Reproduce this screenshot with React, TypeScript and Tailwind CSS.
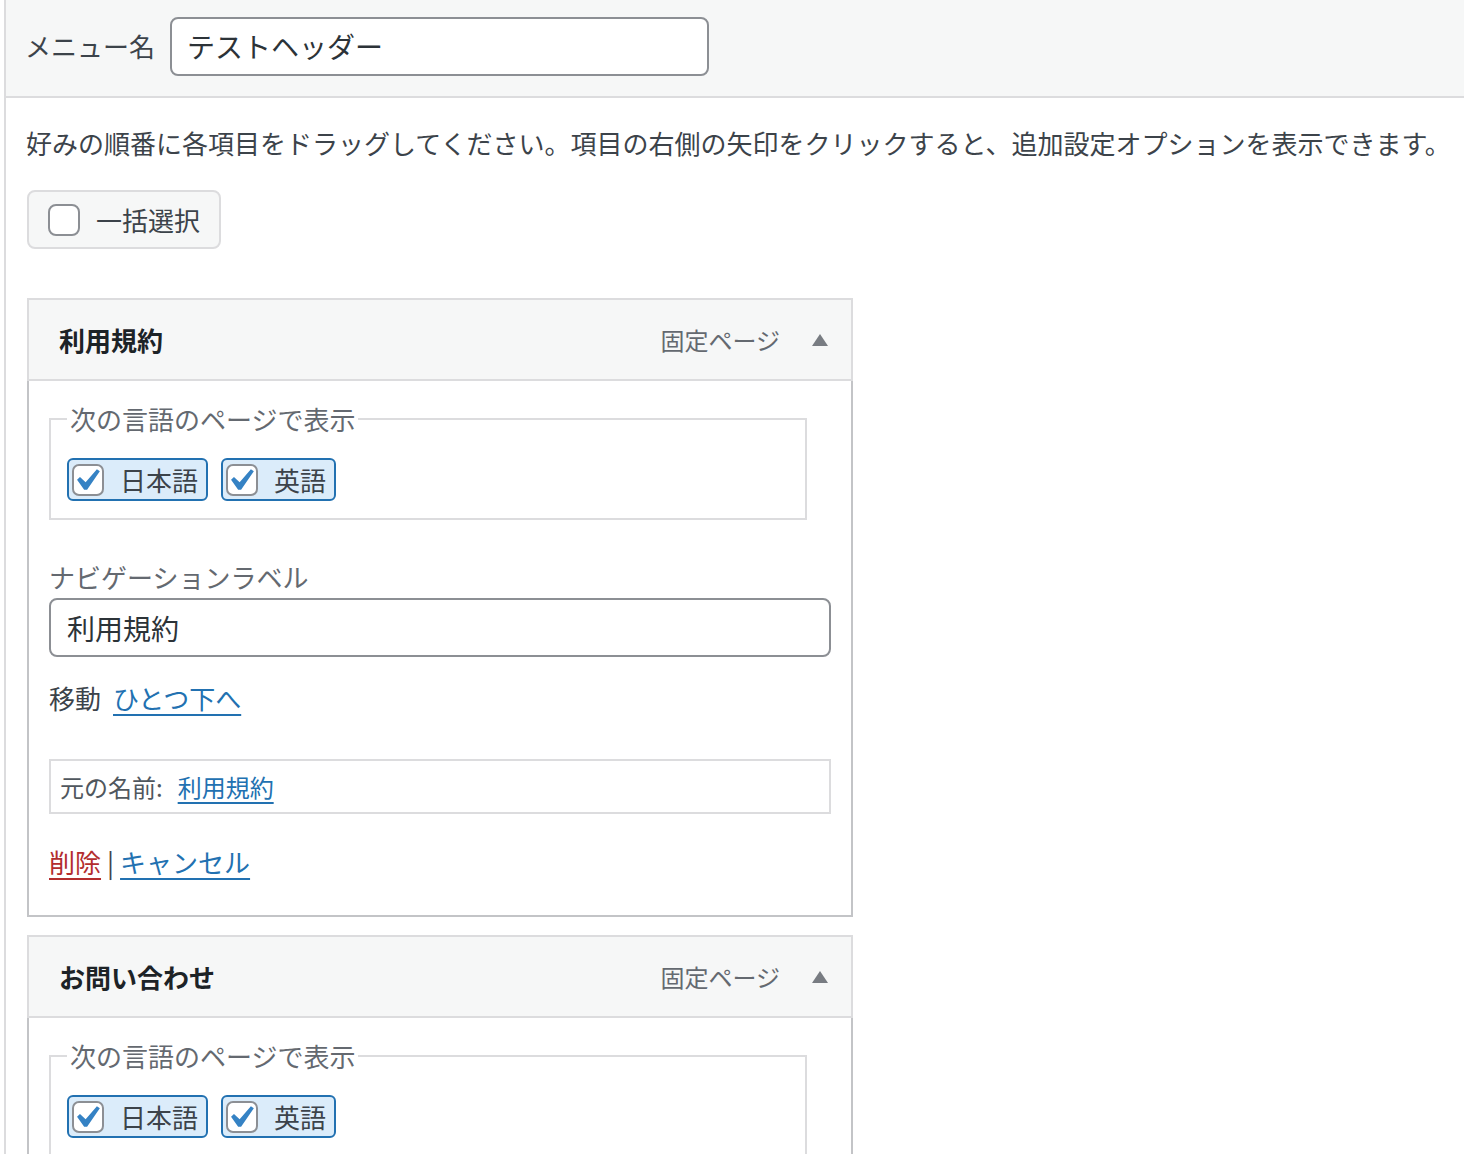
import React from 'react';

const font = { fontFamily: '"Noto Sans CJK JP", "Noto Sans", sans-serif' };

const CheckMark = () => (
  <svg viewBox="5.3 4.4 11.4 10.3" className="w-[25px] h-[23px]">
    <path d="M14.83 4.89l1.34.94-5.81 8.38H9.02L5.78 9.67l1.34-1.25 2.57 2.4z" fill="#3582c4" />
  </svg>
);

const LangPill = ({ label }: { label: string }) => (
  <label className="flex items-center h-[43px] pl-[3px] pr-[8px] border-2 border-[#2271b1] bg-[#dbecfa] rounded-[6px]">
    <span className="w-[32px] h-[32px] rounded-[7px] border-2 border-[#8c8f94] bg-white flex items-center justify-center">
      <CheckMark />
    </span>
    <span className="ml-[16px] text-[26px] leading-[36px] text-[#3c434a]">{label}</span>
  </label>
);

const ItemHeader = ({ title }: { title: string }) => (
  <div className="h-[83px] border-2 border-[#dcdcde] bg-[#f6f7f7] flex items-center pl-[30px] pr-[23px]">
    <span className="text-[26px] font-bold text-[#1d2327] leading-[36px]">{title}</span>
    <span className="ml-auto text-[24px] text-[#646970] leading-[36px]">固定ページ</span>
    <svg viewBox="0 0 16 12" className="ml-[32px] w-[16px] h-[12px]">
      <path d="M8 0L16 12H0z" fill="#787c82" />
    </svg>
  </div>
);

const LangFieldset = () => (
  <fieldset className="w-[758px] border-2 border-[#dcdcde] pl-[16px] pt-[21px] pb-[17px]">
    <legend className="px-[3px] text-[26px] leading-[36px] text-[#646970]">次の言語のページで表示</legend>
    <div className="flex gap-[13px]">
      <LangPill label="日本語" />
      <LangPill label="英語" />
    </div>
  </fieldset>
);

export default function App() {
  return (
    <div className="w-[1464px] h-[1154px] overflow-hidden bg-white" style={font}>
      <div className="ml-[4px] h-full border-l-2 border-[#dcdcde]">
        {/* menu name */}
        <div className="h-[98px] bg-[#f6f7f7] border-b-2 border-[#dcdcde] flex items-center pl-[19px] pb-[4px]">
          <span className="text-[26px] text-[#3c434a] leading-[36px]">メニュー名</span>
          <div className="ml-[15px] w-[539px] h-[59px] bg-white border-2 border-[#8c8f94] rounded-[8px] flex items-center px-[15px] text-[28px] text-[#2c3338]">
            テストヘッダー
          </div>
        </div>

        <div className="pl-[20px]">
          <p className="pt-[25px] text-[26px] leading-[40px] text-[#3c434a] whitespace-nowrap">
            好みの順番に各項目をドラッグしてください。項目の右側の矢印をクリックすると、追加設定オプションを表示できます。
          </p>

          <div className="mt-[27px] ml-[1px] w-[194px] h-[59px] border-2 border-[#dcdcde] bg-[#f6f7f7] rounded-[8px] flex items-center pl-[19px]">
            <span className="w-[32px] h-[32px] rounded-[8px] border-2 border-[#8c8f94] bg-white" />
            <span className="ml-[16px] text-[26px] leading-[36px] text-[#3c434a]">一括選択</span>
          </div>

          {/* item 1 */}
          <div className="mt-[49px] ml-[1px] w-[826px]">
            <ItemHeader title="利用規約" />
            <div className="border-2 border-t-0 border-[#c3c4c7] pl-[20px] pr-[20px] pt-[20px] pb-[35px]">
              <LangFieldset />
              <div className="mt-[39px] text-[26px] leading-[36px] text-[#646970]">ナビゲーションラベル</div>
              <div className="mt-[3px] h-[59px] border-2 border-[#8c8f94] rounded-[8px] flex items-center px-[16px] text-[28px] text-[#2c3338]">
                利用規約
              </div>
              <div className="mt-[23px] text-[26px] leading-[36px] text-[#3c434a]">
                移動
                <a className="ml-[12px] text-[#2271b1] underline decoration-2 underline-offset-[5px]">ひとつ下へ</a>
              </div>
              <div className="mt-[43px] h-[55px] border-2 border-[#dcdcde] flex items-center pl-[9px] text-[24px] text-[#50575e]">
                元の名前:
                <a className="ml-[15px] text-[#2271b1] underline decoration-2 underline-offset-[5px]">利用規約</a>
              </div>
              <div className="mt-[30px] text-[26px] leading-[36px] text-[#3c434a]">
                <a className="text-[#b32d2e] underline decoration-2 underline-offset-[5px]">削除</a>
                <span className="mx-[6px]">|</span>
                <a className="text-[#2271b1] underline decoration-2 underline-offset-[5px]">キャンセル</a>
              </div>
            </div>
          </div>

          {/* item 2 */}
          <div className="mt-[18px] ml-[1px] w-[826px]">
            <ItemHeader title="お問い合わせ" />
            <div className="border-2 border-t-0 border-[#c3c4c7] pl-[20px] pr-[20px] pt-[20px] pb-[33px]">
              <LangFieldset />
            </div>
          </div>
        </div>
      </div>
    </div>
  );
}
